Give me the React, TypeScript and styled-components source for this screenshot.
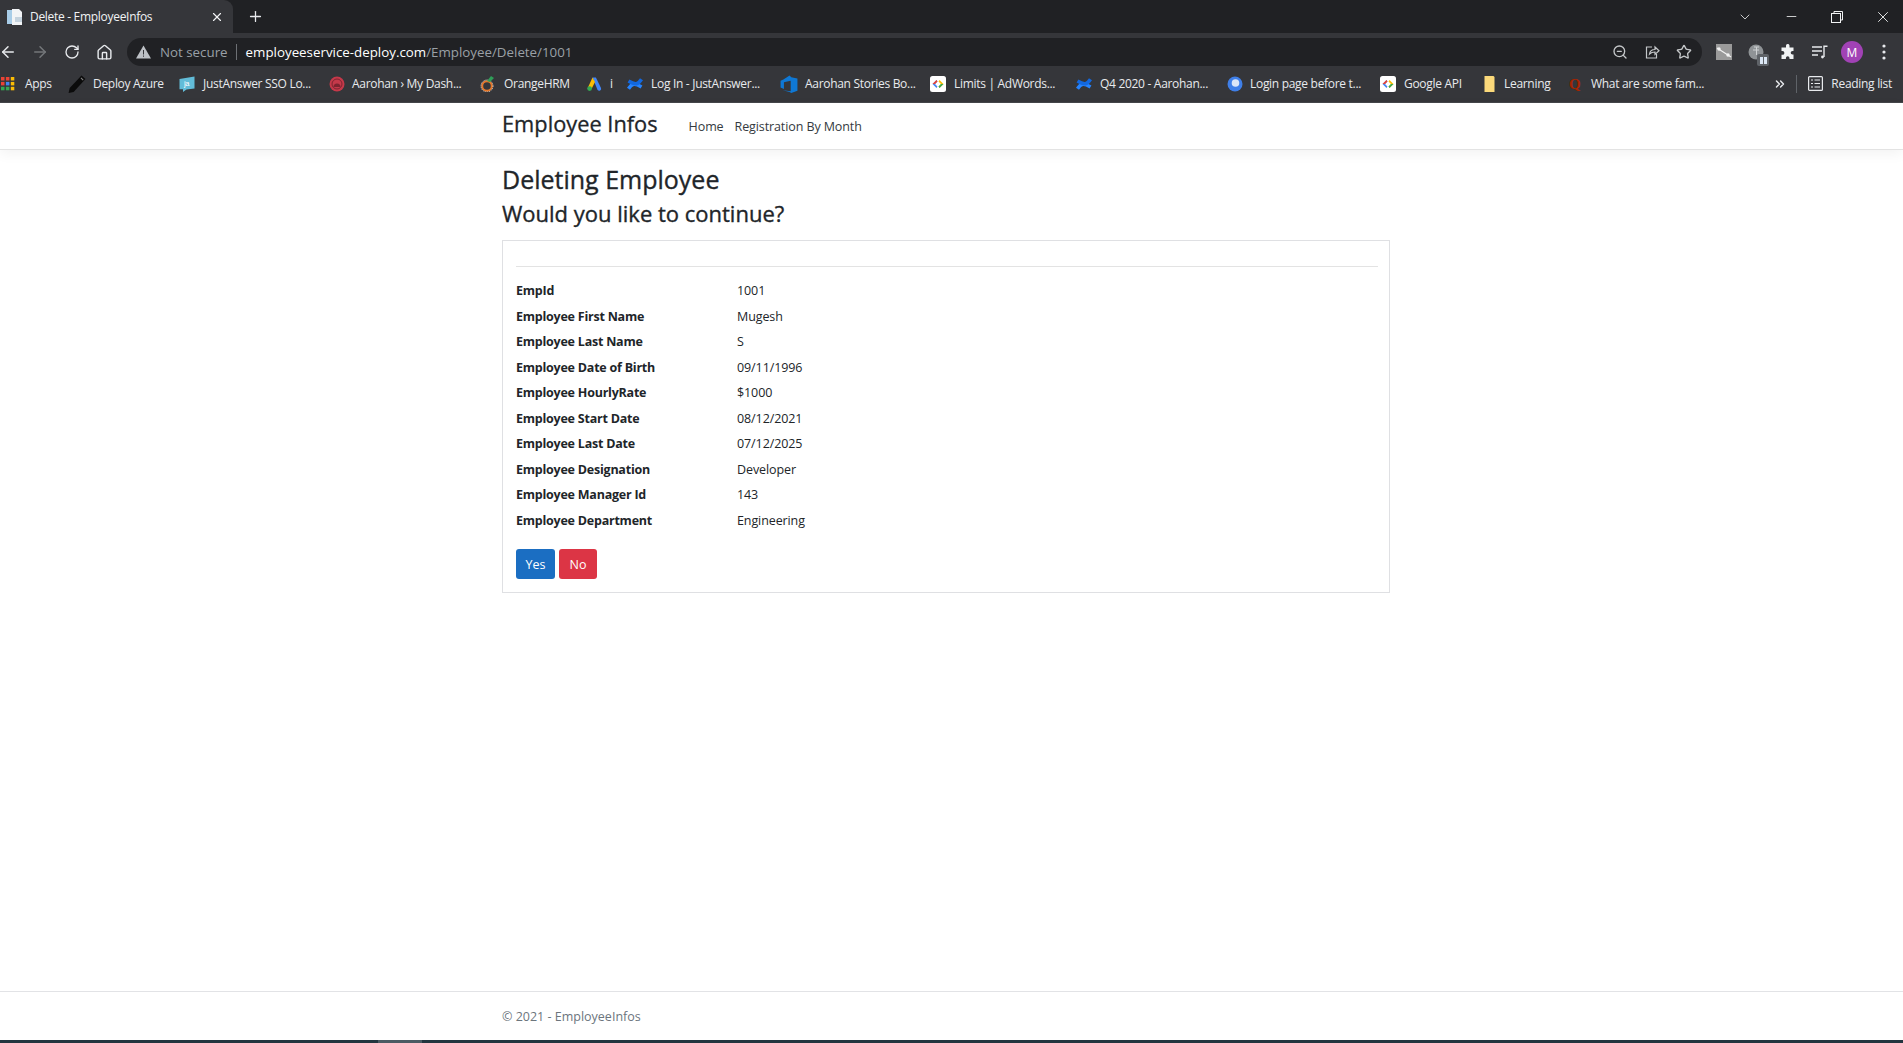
import React from 'react';
import styled, { createGlobalStyle } from 'styled-components';
import { ArrowLeft, ArrowRight, ChevronDown, ChevronsRight, House, Minus, Plus, RotateCw, Star, X, ZoomOut } from 'lucide-react';

const UI_FONT = '"Open Sans", "Noto Sans", "Liberation Sans", sans-serif';

const GlobalStyle = createGlobalStyle`
    html, body {
        margin: 0;
        padding: 0;
        background: #fff;
    }
    body {
        font-family: ${UI_FONT};
        overflow: hidden;
    }
    * {
        box-sizing: border-box;
    }
`;

const Page = styled.div`
    width: 1903px;
    height: 1043px;
    display: flex;
    flex-direction: column;
    overflow: hidden;
`;

/* browser chrome */
const TabStrip = styled.div`
    height: 33px;
    background: #202124;
    display: flex;
    align-items: center;
    flex: none;
`;

const Tab = styled.div`
    width: 233px;
    height: 33px;
    background: #35363a;
    border-top-right-radius: 9px;
    display: flex;
    align-items: center;
    padding: 0 9px 0 7px;
    color: #f1f3f4;
    font-size: 12px;
    letter-spacing: -0.3px;
`;

const TabTitle = styled.span`
    flex: 1;
    margin-left: 7px;
`;

const NewTab = styled.div`
    margin-left: 14px;
    display: flex;
    color: #e8eaed;
`;

const WindowControls = styled.div`
    margin-left: auto;
    margin-right: -3px;
    display: flex;
    align-items: center;
    color: #f1f3f4;
`;

const WindowButton = styled.div`
    width: 46px;
    display: flex;
    justify-content: center;
`;

const Toolbar = styled.div`
    height: 33px;
    background: #35363a;
    display: flex;
    align-items: center;
    padding-top: 5px;
    flex: none;
`;

const NavGroup = styled.div`
    display: flex;
    margin-left: -8px;
`;

const ToolButton = styled.div<{ $muted?: boolean }>`
    width: 32px;
    height: 28px;
    display: flex;
    align-items: center;
    justify-content: center;
    color: ${({ $muted }) => ($muted ? '#74777a' : '#e8eaed')};
    position: relative;
`;

const Omnibox = styled.div`
    margin-left: 7px;
    width: 1575px;
    height: 28px;
    border-radius: 14px;
    background: #202124;
    display: flex;
    align-items: center;
    padding: 0 4px 0 9px;
    font-size: 13.33px;
`;

const NotSecure = styled.span`
    color: #9aa0a6;
    margin-left: 9px;
    padding-right: 8px;
    border-right: 1px solid #6d7074;
    line-height: 16px;
`;

const Host = styled.span`
    color: #fff;
    margin-left: 9px;
`;

const UrlPath = styled.span`
    color: #9aa0a6;
`;

const OmniActions = styled.div`
    margin-left: auto;
    display: flex;
    margin-right: -2px;
`;

const Extensions = styled.div`
    margin-left: 6px;
    display: flex;
    align-items: center;
`;

const Avatar = styled.div`
    width: 22px;
    height: 22px;
    border-radius: 50%;
    background: #a142b5;
    color: #fff;
    font-size: 12px;
    display: flex;
    align-items: center;
    justify-content: center;
`;

const PauseBadge = styled.span`
    position: absolute;
    left: 17px;
    top: 16px;
    width: 12px;
    height: 12px;
    border-radius: 2px;
    background: #5f6368;
    display: flex;
    align-items: center;
    justify-content: center;
    gap: 1px;

    &::before,
    &::after {
        content: '';
        width: 3px;
        height: 7px;
        background: #dbe7f5;
    }
`;

const BookmarkBar = styled.div`
    height: 37px;
    background: #35363a;
    border-bottom: 1px solid #45464a;
    display: flex;
    align-items: center;
    flex: none;
    color: #e8eaed;
    font-size: 12px;
    letter-spacing: -0.3px;
    padding: 0 0 1px 1px;
`;

const Bookmark = styled.div<{ $w: number; $gap?: number }>`
    width: ${({ $w }) => $w}px;
    flex: none;
    display: flex;
    align-items: center;
    gap: ${({ $gap }) => $gap ?? 8}px;
    white-space: nowrap;
`;

const BarEnd = styled.div`
    margin-left: auto;
    display: flex;
    align-items: center;
    padding-right: 11px;
`;

const BarDivider = styled.span`
    width: 1px;
    height: 18px;
    background: #5f6368;
    margin: 0 11px 0 9px;
`;

const ReadingLabel = styled.span`
    margin-left: 8px;
`;

const Favicon = ({ children, size = 16 }: { children: React.ReactNode; size?: number }) => (
    <svg width={size} height={size} viewBox="0 0 16 16" style={{ flex: 'none' }}>
        {children}
    </svg>
);

const DocIcon = () => (
    <Favicon>
        <path d="M0 1h6v14H0z" fill="#a8cde8" />
        <path d="M5 0h7l3 3v13H5z" fill="#f2f4f6" />
        <path d="M8 8h7v5H8z" fill="#c5d3de" />
    </Favicon>
);

const AppsIcon = () => {
    const colors = ['#ea4335', '#ea4335', '#fbbc04', '#ea4335', '#4285f4', '#fbbc04', '#34a853', '#34a853', '#fbbc04'];
    return (
        <Favicon size={14}>
            {colors.map((c, i) => (
                <rect key={i} x={(i % 3) * 5.6} y={Math.floor(i / 3) * 5.6} width="4" height="4" fill={c} />
            ))}
        </Favicon>
    );
};

const PenIcon = () => (
    <Favicon size={18}>
        <path d="M12 0.5l3.5 3L5 15 0.5 16l1-4.5z" fill="#0b0b0b" />
        <path d="M11.5 2.5l2 2" stroke="#888" strokeWidth="1" />
    </Favicon>
);

const JaIcon = () => (
    <Favicon>
        <path d="M0.5 3l15-2.5v12L7.5 13.5 4 16v-2.8l-3.5 0z" fill="#62bcd8" />
        <text x="5" y="10" fontSize="7.5" fill="#fff" fontFamily="Liberation Sans, sans-serif">ja</text>
    </Favicon>
);

const AarohanIcon = () => (
    <Favicon>
        <circle cx="8" cy="8" r="7.5" fill="#c5394a" />
        <circle cx="8" cy="8" r="5" fill="none" stroke="#7e2430" strokeWidth="1" />
        <path d="M4.5 11a3.5 3.5 0 0 1 7 0z" fill="#7e2430" />
    </Favicon>
);

const OrangeIcon = () => (
    <Favicon>
        <circle cx="7" cy="10" r="4.8" fill="none" stroke="#e8792b" strokeWidth="2" />
        <circle cx="7" cy="10" r="6" fill="none" stroke="#fff" strokeWidth="0.8" strokeDasharray="1 1" />
        <path d="M7 5l4-5 3 2-4 4z" fill="#2f9e58" />
    </Favicon>
);

const AdsIcon = () => (
    <Favicon>
        <path d="M6.5 1.5h3.4L15 12a2 2 0 0 1-3.4 2z" fill="#4285f4" />
        <path d="M6.5 1.5L9 6l-3.5 7-3.3-2z" fill="#fbbc04" />
        <circle cx="3.6" cy="12.6" r="2.4" fill="#34a853" />
    </Favicon>
);

const ConfluenceIcon = () => (
    <Favicon>
        <path d="M1.5 12.8C5 7.5 7.5 6.8 14.5 11" fill="none" stroke="#2684ff" strokeWidth="3.6" />
        <path d="M14.5 3.2C11 8.5 8.5 9.2 1.5 5" fill="none" stroke="#1268e0" strokeWidth="3.6" />
    </Favicon>
);

const AzureBoardsIcon = () => (
    <Favicon size={18}>
        <path d="M0.5 5L3 4 8.5 0.5 10 2l5.5 1v11L10 16l-1.5-1-6-1.5 7 1V5L3.5 6.5v6L0.5 11z" fill="#0f78d4" />
    </Favicon>
);

const CodeIcon = () => (
    <Favicon>
        <rect width="16" height="16" rx="2.5" fill="#fff" />
        <path d="M6.5 4L2.5 8l4 4 1-1.5L5 8l2.5-2.5z" fill="#4285f4" />
        <path d="M6.5 4l1 1.5L5 8H2.5z" fill="#ea4335" />
        <path d="M9.5 4l4 4-4 4-1-1.5L11 8 8.5 5.5z" fill="#fbbc04" />
        <path d="M9.5 12l-1-1.5L11 8h2.5z" fill="#34a853" />
    </Favicon>
);

const LoginIcon = () => (
    <Favicon>
        <circle cx="8" cy="8" r="7.5" fill="#3f7fe8" />
        <circle cx="8.5" cy="7" r="3.8" fill="#dbe6f8" />
    </Favicon>
);

const NoteIcon = () => (
    <Favicon>
        <path d="M2.5 0h9l1 1v15h-10z" fill="#fbd97a" />
    </Favicon>
);

const QuoraIcon = () => (
    <Favicon>
        <text x="1" y="13" fontSize="15" fontWeight="700" fill="#a82400" fontFamily="Liberation Serif, serif">Q</text>
    </Favicon>
);

const ShareIcon = () => (
    <svg width="16" height="16" viewBox="0 0 16 16" fill="none" stroke="#c4c7c9" strokeWidth="1.2">
        <path d="M8 3H2.5v11h10v-4" />
        <path d="M5.5 10c.5-3.5 3-4.5 5.5-4.5V3l4 3.8-4 3.7V8C9 8 7 8.5 5.5 10z" />
    </svg>
);

const WarningIcon = () => (
    <svg width="15" height="14" viewBox="0 0 15 14">
        <path d="M7.5 0.5L15 13.5H0z" fill="#bdc1c6" />
        <path d="M7 5h1v4.5H7zM7 10.5h1v1.2H7z" fill="#35363a" />
    </svg>
);

const RestoreIcon = () => (
    <svg width="12" height="12" viewBox="0 0 12 12" fill="none" stroke="currentColor" strokeWidth="1">
        <rect x="0.5" y="2.5" width="9" height="9" />
        <path d="M3 2.5V0.5h8.5V9H9.5" />
    </svg>
);

const GraphExtension = () => (
    <svg width="16" height="16" viewBox="0 0 16 16">
        <rect width="16" height="16" fill="#9a9a9a" />
        <path d="M1 4l14 9" stroke="#f4f4f4" strokeWidth="1.2" />
        <circle cx="3" cy="5" r="1.7" fill="#f4f4f4" />
        <circle cx="12" cy="11" r="1.7" fill="#f4f4f4" />
    </svg>
);

const GlobeExtension = () => (
    <svg width="16" height="16" viewBox="0 0 16 16">
        <circle cx="8" cy="8" r="7.5" fill="#8f9396" />
        <path d="M6 3h5M8.5 3v8M5 6h6" stroke="#cfd2d4" strokeWidth="1" />
    </svg>
);

const PuzzleIcon = () => (
    <svg width="16" height="16" viewBox="0 0 16 16">
        <path
            d="M6 1.5a1.8 1.8 0 0 1 3.5 0V3.5h4v3.5h-1a1.8 1.8 0 0 0 0 3.6h1V15h-4v-1a1.8 1.8 0 0 0-3.6 0v1H1.5v-4.2h1a1.9 1.9 0 0 0 0-3.8h-1V3.5H6z"
            fill="#f1f3f4"
        />
    </svg>
);

const MediaIcon = () => (
    <svg width="16" height="14" viewBox="0 0 16 14" fill="none" stroke="#e8eaed" strokeWidth="1.4">
        <path d="M0 2h10M0 6h10M0 10h6" />
        <path d="M12 12V1.2h3.5" />
        <circle cx="10.5" cy="12" r="1.4" fill="#e8eaed" stroke="none" />
    </svg>
);

const DotsIcon = () => (
    <svg width="4" height="16" viewBox="0 0 4 16" fill="#e8eaed">
        <circle cx="2" cy="2" r="1.6" />
        <circle cx="2" cy="8" r="1.6" />
        <circle cx="2" cy="14" r="1.6" />
    </svg>
);

const ReadingIcon = () => (
    <svg width="15" height="15" viewBox="0 0 15 15" fill="none" stroke="#e8eaed" strokeWidth="1.2">
        <rect x="0.6" y="0.6" width="13.8" height="13.8" rx="1" />
        <path d="M3 4h2M3 7.5h2M3 11h2M6.5 4H12M6.5 7.5H12M6.5 11H12" />
    </svg>
);

/* site */
const SiteNav = styled.nav`
    height: 47px;
    flex: none;
    background: #fff;
    border-bottom: 1px solid #e3e3e3;
    box-shadow: 0 4px 12px rgba(0, 0, 0, 0.05);
    padding-left: 502px;
    display: flex;
    align-items: center;
    color: #212529;
`;

const Brand = styled.a`
    font-size: 21.8px;
    font-weight: 500;
    -webkit-text-stroke: 0.3px #212529;
    line-height: 30px;
    margin-right: 31px;
    margin-top: -4px;
`;

const NavLink = styled.a`
    font-size: 12.5px;
    letter-spacing: -0.1px;
    color: #343a40;
    margin-right: 11px;
    margin-top: 1px;
`;

const Main = styled.main`
    flex: 1;
    padding: 13px 513px 0 502px;
    color: #212529;
`;

const Title = styled.h1`
    font-size: 25px;
    font-weight: 500;
    -webkit-text-stroke: 0.35px #212529;
    line-height: 32px;
    margin: 0;
`;

const Subtitle = styled.h2`
    font-size: 22px;
    font-weight: 500;
    -webkit-text-stroke: 0.35px #212529;
    line-height: 30px;
    margin: 3px 0 0;
`;

const Card = styled.section`
    margin-top: 12px;
    width: 888px;
    height: 353px;
    border: 1px solid #dfe0e3;
    padding: 25px 11px 0 13px;
`;

const Rule = styled.hr`
    border: 0;
    border-top: 1px solid #e3e3e3;
    margin: 0 0 11px;
`;

const DetailList = styled.dl`
    margin: 0;
    display: grid;
    grid-template-columns: 221px 1fr;
    grid-auto-rows: 25.5px;
    align-items: center;
    font-size: 12.5px;
    letter-spacing: -0.1px;
`;

const Term = styled.dt`
    font-weight: 700;
    letter-spacing: -0.23px;
`;

const Value = styled.dd`
    margin: 0;
`;

const Actions = styled.div`
    margin-top: 16px;
    display: flex;
    gap: 4px;
`;

const Button = styled.button<{ $tone: 'primary' | 'danger' }>`
    height: 30px;
    width: ${({ $tone }) => ($tone === 'primary' ? 39 : 38)}px;
    padding: 0;
    border: 0;
    border-radius: 3px;
    color: #fff;
    font: 12.5px ${UI_FONT};
    background: ${({ $tone }) => ($tone === 'primary' ? '#1b6ec2' : '#dc3545')};
`;

const Footer = styled.footer`
    height: 49px;
    flex: none;
    border-top: 1px solid #e2e3e6;
    padding-left: 502px;
    display: flex;
    align-items: center;
    color: #6c757d;
    font-size: 12.5px;
`;

const TaskEdge = styled.div`
    height: 3px;
    flex: none;
    background: #22353f;
    padding-left: 378px;
`;

const TaskEdgeItem = styled.div`
    width: 44px;
    height: 3px;
    background: #4b5a63;
`;

const bookmarks: { label: string; w: number; gap?: number; icon: React.ReactNode }[] = [
    { label: 'Deploy Azure', w: 111, gap: 7, icon: <PenIcon /> },
    { label: 'JustAnswer SSO Lo...', w: 150, icon: <JaIcon /> },
    { label: 'Aarohan › My Dash...', w: 151, gap: 7, icon: <AarohanIcon /> },
    { label: 'OrangeHRM', w: 106, icon: <OrangeIcon /> },
    { label: 'i', w: 41, icon: <AdsIcon /> },
    { label: 'Log In - JustAnswer...', w: 153, icon: <ConfluenceIcon /> },
    { label: 'Aarohan Stories Bo...', w: 150, gap: 7, icon: <AzureBoardsIcon /> },
    { label: 'Limits | AdWords...', w: 146, icon: <CodeIcon /> },
    { label: 'Q4 2020 - Aarohan...', w: 151, icon: <ConfluenceIcon /> },
    { label: 'Login page before t...', w: 153, gap: 7, icon: <LoginIcon /> },
    { label: 'Google API', w: 102, icon: <CodeIcon /> },
    { label: 'Learning', w: 86, gap: 6, icon: <NoteIcon /> },
    { label: 'What are some fam...', w: 140, gap: 7, icon: <QuoraIcon /> },
];

const details: [string, string][] = [
    ['EmpId', '1001'],
    ['Employee First Name', 'Mugesh'],
    ['Employee Last Name', 'S'],
    ['Employee Date of Birth', '09/11/1996'],
    ['Employee HourlyRate', '$1000'],
    ['Employee Start Date', '08/12/2021'],
    ['Employee Last Date', '07/12/2025'],
    ['Employee Designation', 'Developer'],
    ['Employee Manager Id', '143'],
    ['Employee Department', 'Engineering'],
];

export default function App() {
    return (
        <Page>
            <GlobalStyle />
            <TabStrip>
                <Tab>
                    <DocIcon />
                    <TabTitle>Delete - EmployeeInfos</TabTitle>
                    <X size={14} strokeWidth={2} />
                </Tab>
                <NewTab>
                    <Plus size={17} strokeWidth={1.8} />
                </NewTab>
                <WindowControls>
                    <WindowButton>
                        <ChevronDown size={16} strokeWidth={1.2} />
                    </WindowButton>
                    <WindowButton>
                        <Minus size={15} strokeWidth={1.3} />
                    </WindowButton>
                    <WindowButton>
                        <RestoreIcon />
                    </WindowButton>
                    <WindowButton>
                        <X size={18} strokeWidth={1.2} />
                    </WindowButton>
                </WindowControls>
            </TabStrip>
            <Toolbar>
                <NavGroup>
                    <ToolButton>
                        <ArrowLeft size={18} strokeWidth={2} />
                    </ToolButton>
                    <ToolButton $muted>
                        <ArrowRight size={18} strokeWidth={2} />
                    </ToolButton>
                    <ToolButton>
                        <RotateCw size={16} strokeWidth={2} />
                    </ToolButton>
                    <ToolButton>
                        <House size={17} strokeWidth={2} />
                    </ToolButton>
                </NavGroup>
                <Omnibox>
                    <WarningIcon />
                    <NotSecure>Not secure</NotSecure>
                    <Host>employeeservice-deploy.com</Host>
                    <UrlPath>/Employee/Delete/1001</UrlPath>
                    <OmniActions>
                        <ToolButton>
                            <ZoomOut size={16} color="#c4c7c9" />
                        </ToolButton>
                        <ToolButton>
                            <ShareIcon />
                        </ToolButton>
                        <ToolButton>
                            <Star size={16} color="#c4c7c9" />
                        </ToolButton>
                    </OmniActions>
                </Omnibox>
                <Extensions>
                    <ToolButton>
                        <GraphExtension />
                    </ToolButton>
                    <ToolButton>
                        <GlobeExtension />
                        <PauseBadge />
                    </ToolButton>
                    <ToolButton>
                        <PuzzleIcon />
                    </ToolButton>
                    <ToolButton>
                        <MediaIcon />
                    </ToolButton>
                    <ToolButton>
                        <Avatar>M</Avatar>
                    </ToolButton>
                    <ToolButton>
                        <DotsIcon />
                    </ToolButton>
                </Extensions>
            </Toolbar>
            <BookmarkBar>
                <Bookmark $w={67} $gap={10}>
                    <AppsIcon />
                    Apps
                </Bookmark>
                {bookmarks.map((b) => (
                    <Bookmark key={b.label + b.w} $w={b.w} $gap={b.gap}>
                        {b.icon}
                        {b.label}
                    </Bookmark>
                ))}
                <BarEnd>
                    <ChevronsRight size={14} strokeWidth={2.5} />
                    <BarDivider />
                    <ReadingIcon />
                    <ReadingLabel>Reading list</ReadingLabel>
                </BarEnd>
            </BookmarkBar>
            <SiteNav>
                <Brand>Employee Infos</Brand>
                <NavLink>Home</NavLink>
                <NavLink>Registration By Month</NavLink>
            </SiteNav>
            <Main>
                <Title>Deleting Employee</Title>
                <Subtitle>Would you like to continue?</Subtitle>
                <Card>
                    <Rule />
                    <DetailList>
                        {details.map(([term, value]) => (
                            <React.Fragment key={term}>
                                <Term>{term}</Term>
                                <Value>{value}</Value>
                            </React.Fragment>
                        ))}
                    </DetailList>
                    <Actions>
                        <Button $tone="primary">Yes</Button>
                        <Button $tone="danger">No</Button>
                    </Actions>
                </Card>
            </Main>
            <Footer>© 2021 - EmployeeInfos</Footer>
            <TaskEdge>
                <TaskEdgeItem />
            </TaskEdge>
        </Page>
    );
}
